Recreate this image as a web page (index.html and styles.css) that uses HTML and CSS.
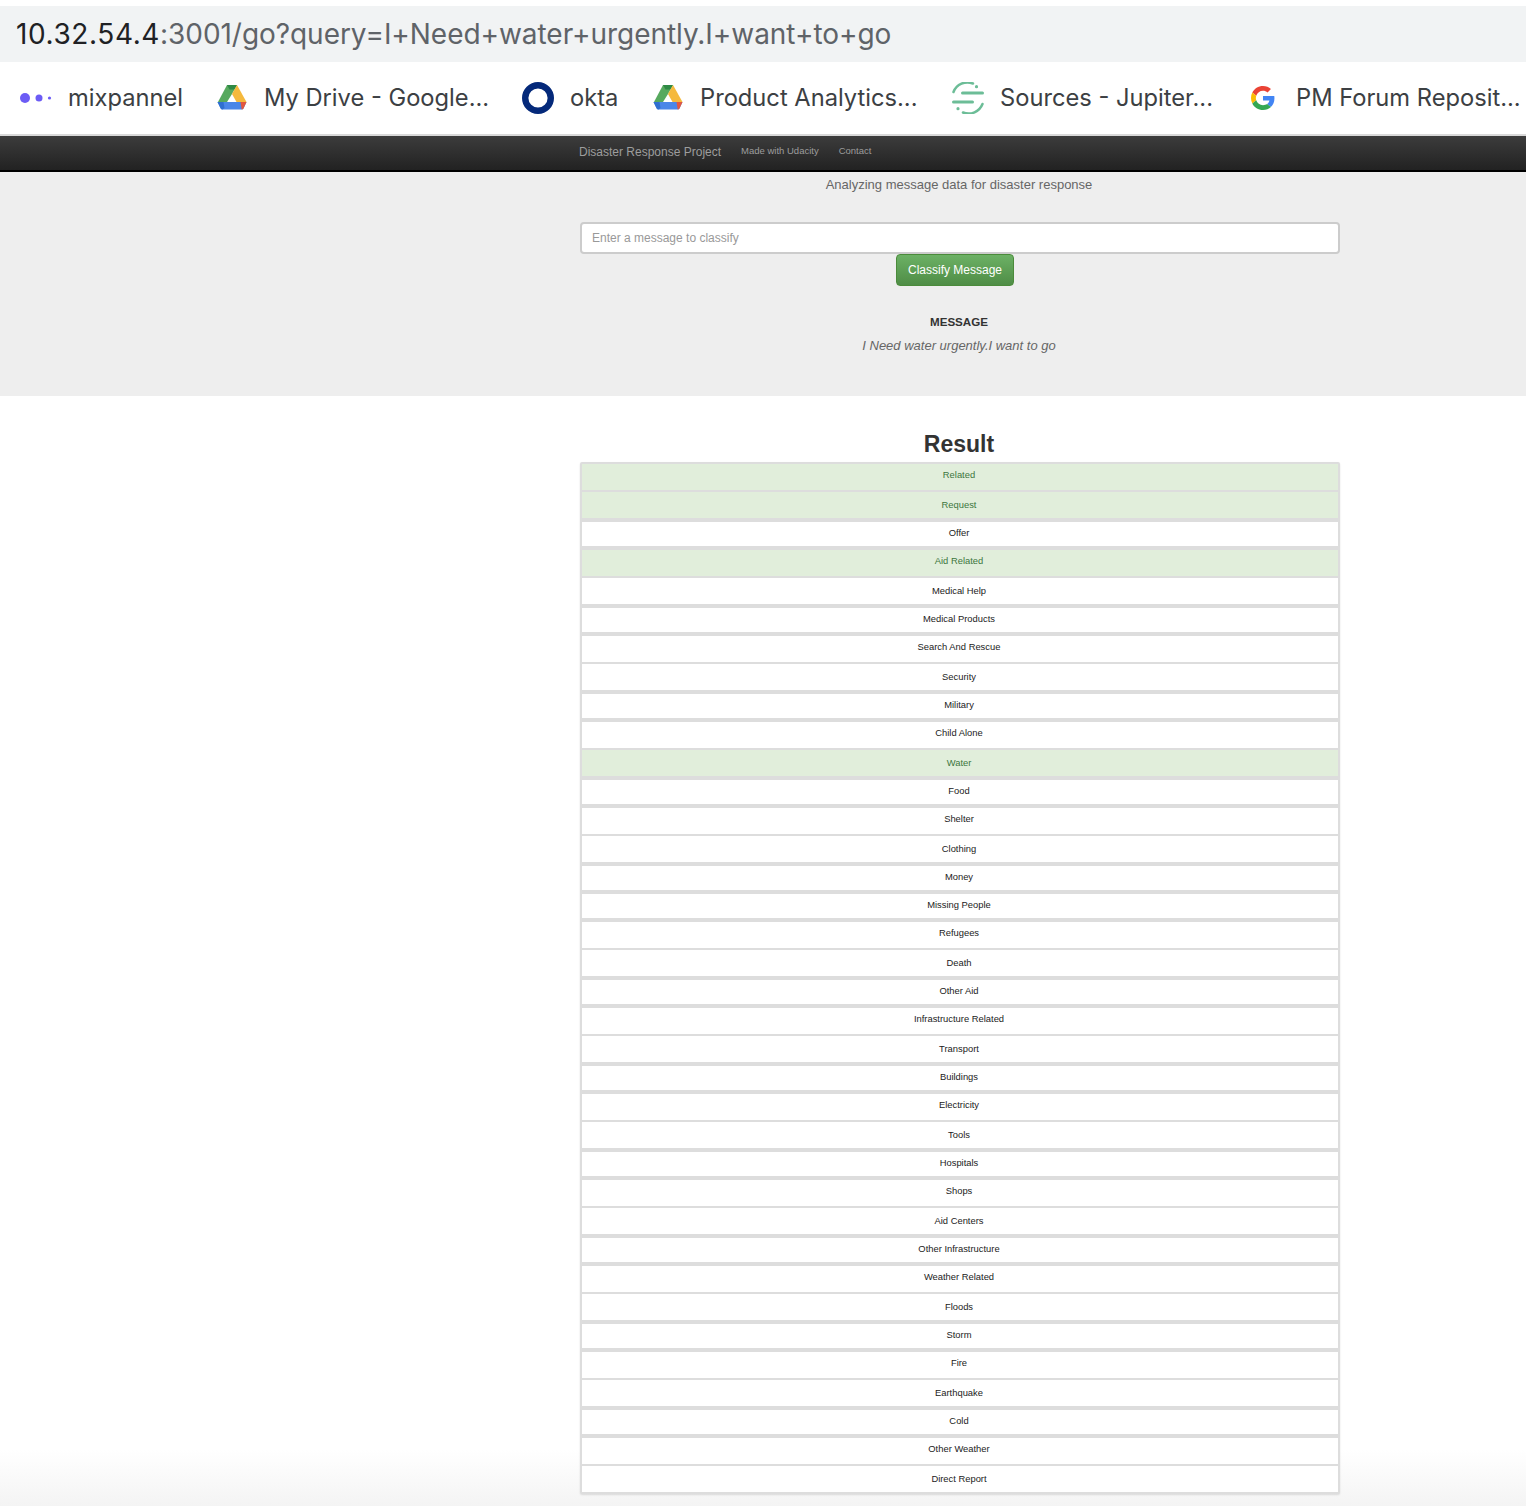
FILE: index.html
```html
<!DOCTYPE html>
<html lang="en">
<head>
  <meta charset="UTF-8">
  <title>Disaster Response Project</title>
  <link rel="stylesheet" href="styles.css">
</head>
<body>

  <div class="url-bar"><span class="host">10.32.54.4</span>:3001/go?query=I+Need+water+urgently.I+want+to+go</div>

  <div class="bookmarks">
    <div class="mark mark-mix">
      <svg width="34" height="12" viewBox="0 0 34 12"><circle cx="6" cy="6" r="5" fill="#6c5cf5"/><circle cx="20" cy="6" r="3.5" fill="#6c5cf5"/><circle cx="30.5" cy="6" r="1.6" fill="#6c5cf5"/></svg>
      <span>mixpannel</span>
    </div>
    <div class="mark mark-drive">
      <svg width="30" height="28" viewBox="0 0 30 28"><path d="M10 1h10l-5 9-5 8H1z" fill="#57a95e"/><path d="M10 1h10l-2.500 4.500h-5z" fill="#2f8a45"/><path d="M20 1l9.500 17h-10L15 10z" fill="#f5b93d"/><path d="M6.500 18h23l-3 6.500a2 2 0 0 1-1.800 1H5.500a2 2 0 0 1-1.800-1L.5 18z" fill="#4a86e8"/><path d="M6.500 18H.5l3.200 6.500a2 2 0 0 0 1.800 1L7.500 24z" fill="#2f6fd0"/><path d="M23.500 18h6l-3 6.500a2 2 0 0 1-1.800 1z" fill="#e2573f"/></svg>
      <span>My Drive - Google...</span>
    </div>
    <div class="mark mark-okta">
      <svg width="32" height="32" viewBox="0 0 32 32"><circle cx="16" cy="16" r="12.800" fill="none" stroke="#04297a" stroke-width="6.400"/></svg>
      <span>okta</span>
    </div>
    <div class="mark mark-product">
      <svg width="30" height="28" viewBox="0 0 30 28"><path d="M10 1h10l-5 9-5 8H1z" fill="#57a95e"/><path d="M10 1h10l-2.500 4.500h-5z" fill="#2f8a45"/><path d="M20 1l9.500 17h-10L15 10z" fill="#f5b93d"/><path d="M6.500 18h23l-3 6.500a2 2 0 0 1-1.800 1H5.500a2 2 0 0 1-1.800-1L.5 18z" fill="#4a86e8"/><path d="M6.500 18H.5l3.200 6.500a2 2 0 0 0 1.800 1L7.500 24z" fill="#2f6fd0"/><path d="M23.500 18h6l-3 6.500a2 2 0 0 1-1.800 1z" fill="#e2573f"/></svg>
      <span>Product Analytics...</span>
    </div>
    <div class="mark mark-sources">
      <svg width="32" height="32" viewBox="0 0 32 32" fill="none" stroke="#6cbd97" stroke-linecap="round"><path stroke-width="2.500" d="M1.500 10A15 15 0 0 1 21 1.500"/><path stroke-width="2.500" d="M30.500 22A15 15 0 0 1 11 30.500"/><path stroke-width="3" d="M10.500 11h20"/><path stroke-width="3" d="M1.500 20h19"/><circle cx="24.500" cy="4.700" r=".8" stroke-width="1.600"/><circle cx="6" cy="26.700" r=".8" stroke-width="1.600"/></svg>
      <span>Sources - Jupiter...</span>
    </div>
    <div class="mark mark-google">
      <svg width="24" height="24" viewBox="0 0 48 48"><path fill="#ea4335" d="M24 9.500c3.500 0 6.700 1.300 9.100 3.500l6.800-6.800C35.800 2.400 30.300 0 24 0 14.600 0 6.500 5.400 2.600 13.200l7.900 6.100C12.400 13.700 17.700 9.500 24 9.500z"/><path fill="#4285f4" d="M46.900 24.500c0-1.600-.1-3.100-.4-4.500H24v9h12.900c-.6 3-2.200 5.500-4.800 7.200l7.700 6c4.500-4.200 7.100-10.300 7.100-17.700z"/><path fill="#fbbc05" d="M10.500 28.700c-.5-1.500-.8-3-.8-4.700s.3-3.200.8-4.700l-7.900-6.100C.9 16.500 0 20.100 0 24s.9 7.500 2.600 10.800z"/><path fill="#34a853" d="M24 48c6.500 0 11.900-2.100 15.900-5.800l-7.700-6c-2.200 1.400-4.900 2.300-8.200 2.300-6.300 0-11.600-4.200-13.500-9.800l-7.900 6.100C6.500 42.600 14.600 48 24 48z"/></svg>
      <span>PM Forum Reposit...</span>
    </div>
  </div>

  <nav class="navbar">
    <div class="nav-inner">
      <span class="brand">Disaster Response Project</span>
      <span class="nav-link">Made with Udacity</span>
      <span class="nav-link">Contact</span>
    </div>
  </nav>

  <section class="jumbotron">
    <div class="container">
      <p class="lead">Analyzing message data for disaster response</p>
      <div class="query">Enter a message to classify</div>
      <div class="button-row"><button class="btn-classify">Classify Message</button></div>
      <h4 class="msg-title">MESSAGE</h4>
      <p class="msg-text">I Need water urgently.I want to go</p>
    </div>
  </section>

  <section class="results container">
    <h2 class="result-title">Result</h2>
    <ul class="result-list">
      <li class="on">Related</li>
      <li class="on">Request</li>
      <li>Offer</li>
      <li class="on">Aid Related</li>
      <li>Medical Help</li>
      <li>Medical Products</li>
      <li>Search And Rescue</li>
      <li>Security</li>
      <li>Military</li>
      <li>Child Alone</li>
      <li class="on">Water</li>
      <li>Food</li>
      <li>Shelter</li>
      <li>Clothing</li>
      <li>Money</li>
      <li>Missing People</li>
      <li>Refugees</li>
      <li>Death</li>
      <li>Other Aid</li>
      <li>Infrastructure Related</li>
      <li>Transport</li>
      <li>Buildings</li>
      <li>Electricity</li>
      <li>Tools</li>
      <li>Hospitals</li>
      <li>Shops</li>
      <li>Aid Centers</li>
      <li>Other Infrastructure</li>
      <li>Weather Related</li>
      <li>Floods</li>
      <li>Storm</li>
      <li>Fire</li>
      <li>Earthquake</li>
      <li>Cold</li>
      <li>Other Weather</li>
      <li>Direct Report</li>
    </ul>
  </section>

</body>
</html>
```

FILE: styles.css
```css
html, body {
  margin: 0;
  padding: 0;
}
body {
  height: 1506px;
  overflow: hidden;
  background: linear-gradient(#fff 1450px, #f4f4f4 1506px);
  font-family: "Liberation Sans", Arial, sans-serif;
  color: #333;
}
.url-bar {
  margin-top: 6px;
  height: 56px;
  line-height: 56px;
  padding-left: 16px;
  background: #f1f3f4;
  font-family: Inter, Roboto, sans-serif;
  font-size: 28px;
  letter-spacing: -.05px;
  color: #5f6368;
  white-space: nowrap;
}
.host {
  color: #202124;
  letter-spacing: .6px;
}
.bookmarks {
  height: 72px;
  padding-left: 19px;
  background: #fff;
  display: flex;
  align-items: center;
  font-family: Inter, Roboto, sans-serif;
  font-size: 23.700px;
  color: #3c4043;
  white-space: nowrap;
}
.mark {
  display: flex;
  align-items: center;
  flex: none;
}
.mark span {
  margin-bottom: 2px;
}
.mark-mix {
  width: 198px;
  gap: 15px;
}
.mark-drive {
  width: 305px;
  gap: 17px;
}
.mark-okta {
  width: 131px;
  gap: 16px;
}
.mark-product {
  width: 299px;
  gap: 17px;
}
.mark-sources {
  width: 299px;
  gap: 16px;
}
.mark-google {
  gap: 21px;
}
.navbar {
  height: 38px;
  border-top: 2px solid #d9d9d9;
  border-bottom: 2px solid #000;
  background: linear-gradient(#3c3c3c, #222);
  box-sizing: border-box;
}
.nav-inner {
  margin-left: 579px;
  display: flex;
  align-items: center;
  gap: 20px;
  height: 30px;
  color: #9d9d9d;
}
.brand {
  font-size: 12px;
  padding-top: 2px;
}
.nav-link {
  font-size: 9.500px;
  position: relative;
  top: -1px;
}
.container {
  width: 760px;
  margin-left: 580px;
}
.jumbotron {
  height: 224px;
  background: #eee;
  overflow: hidden;
}
.jumbotron .container {
  text-align: center;
}
.lead {
  margin: 5px 0 0;
  padding-right: 2px;
  height: 16px;
  line-height: 16px;
  font-size: 13px;
  color: #666;
}
.query {
  margin-top: 29px;
  height: 32px;
  box-sizing: border-box;
  border: 2px solid #ccc;
  border-radius: 4px;
  background: #fff;
  padding-left: 10px;
  font-size: 12px;
  line-height: 28px;
  text-align: left;
  color: #999;
}
.button-row {
  padding-left: 316px;
}
.btn-classify {
  display: block;
  width: 118px;
  height: 32px;
  padding: 0;
  border: 1px solid #4b8b3b;
  border-radius: 4px;
  background: linear-gradient(#6cb165, #4f8d46);
  color: #fff;
  font-family: "Liberation Sans", Arial, sans-serif;
  font-size: 12px;
}
.msg-title {
  margin: 28px 0 0;
  padding-right: 2px;
  font-size: 11.600px;
  line-height: 16px;
  font-weight: 700;
  color: #333;
}
.msg-text {
  margin: 7px 0 0;
  padding-right: 2px;
  font-size: 13px;
  line-height: 18px;
  font-style: italic;
  color: #666;
}
.result-title {
  margin: 34px 0 0;
  padding-right: 2px;
  height: 32px;
  line-height: 28px;
  text-align: center;
  font-size: 23px;
  font-weight: 700;
  color: #333;
}
.result-list {
  list-style: none;
  margin: 0;
  padding: 2px;
  background: #ddd;
  border-radius: 2px;
  box-shadow: 0 1px 2px rgba(0, 0, 0, .12);
}
.result-list li {
  height: 26px;
  margin-bottom: 4px;
  padding-right: 2px;
  background: #fff;
  text-align: center;
  font-size: 9.400px;
  line-height: 25px;
  color: #222;
}
/* rows repeat 26/2, 26/4, 24/4, with one extra short row at 16 */
.result-list li:nth-child(-n+15):nth-child(3n+1),
.result-list li:nth-child(n+16):nth-child(3n+2) {
  margin-bottom: 2px;
  line-height: 21px;
}
.result-list li:nth-child(-n+15):nth-child(3n),
.result-list li:nth-child(n+16):nth-child(3n+1) {
  height: 24px;
  line-height: 21px;
}
.result-list li:last-child {
  margin-bottom: 0;
}
.result-list .on {
  background: #e1eedb;
  color: #3c763d;
}
```
